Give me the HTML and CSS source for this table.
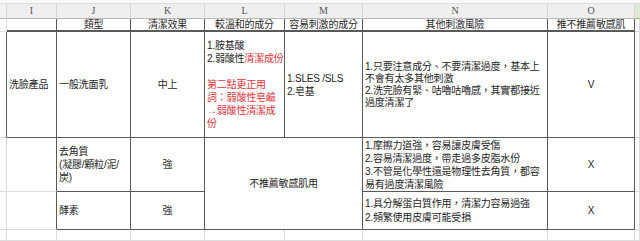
FILE: index.html
```html
<!DOCTYPE html>
<html lang="zh-Hant">
<head>
<meta charset="utf-8">
<title>洗臉產品比較</title>
<link rel="stylesheet" href="styles.css">
</head>
<body>
<div class="sheet">
  <div class="topstrip"></div>

  <div class="col-h corner"></div>
  <div class="col-h">I</div>
  <div class="col-h">J</div>
  <div class="col-h">K</div>
  <div class="col-h">L</div>
  <div class="col-h">M</div>
  <div class="col-h">N</div>
  <div class="col-h">O</div>
  <div class="col-h sel"></div>

  <div class="cell rh"></div>
  <div class="cell hd dr db2"></div>
  <div class="cell hd c dr db2">類型</div>
  <div class="cell hd c dr db2">清潔效果</div>
  <div class="cell hd c dr db2">較溫和的成分</div>
  <div class="cell hd c dr db2">容易刺激的成分</div>
  <div class="cell hd c dr db2">其他刺激風險</div>
  <div class="cell hd c dr db2">推不推薦敏感肌</div>
  <div class="cell"></div>

  <div class="cell rh dr"></div>
  <div class="cell dr db">洗臉產品</div>
  <div class="cell dr db">一般洗面乳</div>
  <div class="cell c dr db">中上</div>
  <div class="cell dr db lh13"><p>1.胺基酸<br>2.弱酸性<span class="red">清潔成份</span><br>&nbsp;<br><span class="red">第二點更正用<br>詞：弱酸性皂鹼<br>→弱酸性清潔成<br>份</span></p></div>
  <div class="cell dr db"><p>1.SLES /SLS<br>2.皂基</p></div>
  <div class="cell dr db lh12"><p>1.只要注意成分、不要清潔過度，基本上<br>不會有太多其他刺激<br>2.洗完臉有緊、咕嚕咕嚕感，其實都接近<br>過度清潔了</p></div>
  <div class="cell c dr db">V</div>
  <div class="cell"></div>

  <div class="cell rh"></div>
  <div class="cell dr"></div>
  <div class="cell dr db"><p>去角質<br>(凝膠/顆粒/泥/<br>炭)</p></div>
  <div class="cell c dr db">強</div>
  <div class="cell c dr db merged">不推薦敏感肌用</div>
  <div class="cell dr db lh13"><p>1.摩擦力道強，容易讓皮膚受傷<br>2.容易清潔過度，帶走過多皮脂水份<br>3.不管是化學性還是物理性去角質，都容<br>易有過度清潔風險</p></div>
  <div class="cell c dr db">X</div>
  <div class="cell"></div>

  <div class="cell rh"></div>
  <div class="cell dr"></div>
  <div class="cell dr db">酵素</div>
  <div class="cell c dr db">強</div>
  <div class="cell dr db lh14"><p>1.具分解蛋白質作用，清潔力容易過強<br>2.頻繁使用皮膚可能受損</p></div>
  <div class="cell c dr db">X</div>
  <div class="cell"></div>

  <div class="cell rh"></div>
  <div class="cell"></div>
  <div class="cell"></div>
  <div class="cell"></div>
  <div class="cell"></div>
  <div class="cell"></div>
  <div class="cell"></div>
  <div class="cell"></div>
  <div class="cell"></div>
</div>
</body>
</html>
```

FILE: styles.css
```css
* {
  box-sizing: border-box;
}

html, body {
  margin: 0;
  padding: 0;
  background: #ffffff;
}

.sheet {
  width: 640px;
  height: 241px;
  overflow: hidden;
  display: grid;
  grid-template-columns: 7px 50px 74px 74px 80px 78px 185px 87px 1fr;
  grid-template-rows: 4px 15px 13px 106px 54px 38px 1fr;
  font-family: "Liberation Sans", "Noto Sans CJK TC", sans-serif;
  font-size: 10px;
  color: #1e1e1e;
}

.topstrip {
  grid-column: 1 / -1;
  background: #f9f9f9;
  border-bottom: 1px solid #dedede;
}

.col-h {
  background: #efefef;
  border-right: 1px solid #d4d4d4;
  border-bottom: 1px solid #b9b9b9;
  font-family: "Liberation Serif", "DejaVu Serif", serif;
  font-size: 10px;
  color: #555555;
  display: flex;
  align-items: center;
  justify-content: center;
  line-height: 1;
}

.col-h.corner {
  background: #f2f2f2;
}

.col-h.sel {
  background: #dde9d4;
  border-bottom-color: #9cbf86;
  border-right: none;
}

.cell {
  border-right: 1px solid #dcdcdc;
  border-bottom: 1px solid #dcdcdc;
  display: flex;
  align-items: center;
  justify-content: flex-start;
  padding-left: 2px;
  white-space: nowrap;
  line-height: 13px;
  letter-spacing: -0.2px;
}

.cell p {
  margin: 0;
}

.cell.rh {
  padding: 0;
}

.cell.hd {
  color: #2a2a2a;
  line-height: 11px;
}

.cell.c {
  justify-content: center;
  padding-left: 0;
}

.dr {
  border-right-color: #5a5a5a;
}

.db {
  border-bottom-color: #5a5a5a;
}

.db2 {
  border-bottom: 2px solid #5a5a5a;
}

.merged {
  grid-column: span 2;
  grid-row: span 2;
}

.lh12 {
  line-height: 12px;
}

.lh13 {
  line-height: 13px;
}

.lh14 {
  line-height: 14px;
}

.red {
  color: #e2343b;
}
```
